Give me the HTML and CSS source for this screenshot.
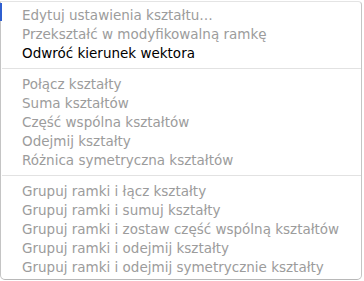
FILE: index.html
```html
<!doctype html>
<html>
<head>
<title>Menu</title>
<link rel="stylesheet" href="styles.css">
</head>
<body>
<div class="focus-edge"></div>
<div class="menu">
<div class="menu-item disabled">Edytuj ustawienia kształtu…</div>
<div class="menu-item disabled">Przekształć w modyfikowalną ramkę</div>
<div class="menu-item">Odwróć kierunek wektora</div>
<div class="menu-separator"></div>
<div class="menu-item disabled">Połącz kształty</div>
<div class="menu-item disabled">Suma kształtów</div>
<div class="menu-item disabled">Część wspólna kształtów</div>
<div class="menu-item disabled">Odejmij kształty</div>
<div class="menu-item disabled">Różnica symetryczna kształtów</div>
<div class="menu-separator"></div>
<div class="menu-item disabled">Grupuj ramki i łącz kształty</div>
<div class="menu-item disabled">Grupuj ramki i sumuj kształty</div>
<div class="menu-item disabled">Grupuj ramki i zostaw część wspólną kształtów</div>
<div class="menu-item disabled">Grupuj ramki i odejmij kształty</div>
<div class="menu-item disabled">Grupuj ramki i odejmij symetrycznie kształty</div>
</div>
</body>
</html>
```

FILE: styles.css
```css
body {
	margin: 0;
	background: #ffffff;
	font-family: "DejaVu Sans", "Lucida Grande", sans-serif;
}

div.focus-edge {
	position: absolute;
	left: 0;
	top: 3px;
	width: 2px;
	height: 18px;
	background: #2f5fd0;
}

div.menu {
	width: 362px;
	height: 279px;
	box-sizing: border-box;
	margin-top: 1px;
	padding-top: 4px;
	background: #ffffff;
	border-left: solid 1px #c4c4c4;
	border-right: solid 1px #c4c4c4;
	border-top: solid 1px #e4e4e4;
	border-bottom: solid 1px #b8b8b8;
	border-radius: 0 4px 5px 5px;
}

div.menu-item {
	height: 19px;
	line-height: 19px;
	padding-left: 21px;
	font-size: 13.5px;
	color: #000000;
	white-space: nowrap;
}

div.menu-item.disabled {
	color: #9c9c9c;
}

div.menu-separator {
	height: 1px;
	margin: 5px 0 6px 1px;
	background: #e2e2e2;
}
```
